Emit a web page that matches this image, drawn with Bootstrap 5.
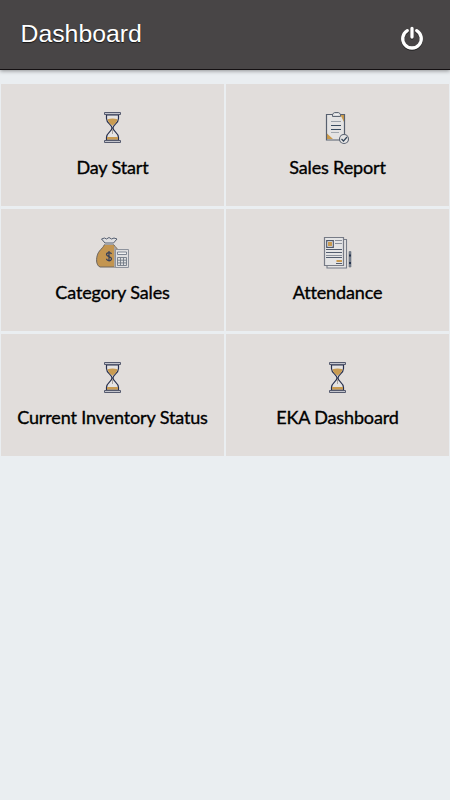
<!DOCTYPE html>
<html lang="en">
<head>
<meta charset="utf-8">
<meta name="viewport" content="width=device-width, initial-scale=1">
<title>Dashboard</title>
<link href="https://cdn.jsdelivr.net/npm/bootstrap@5.3.0/dist/css/bootstrap.min.css" rel="stylesheet">
<style>
body{background:#eaeef1;font-family:"Liberation Sans",Arial,sans-serif}
.app-bar{height:70px;background:#484546;border-bottom:1px solid #141012;box-shadow:0 1px 4px rgba(0,0,0,.4);padding:0 26px 0 20.500px}
.app-title{font-size:24.800px;line-height:30px;color:#fff;text-shadow:0 1px 1px rgba(0,0,0,.7);padding-bottom:2px}
.power{margin-top:7px;filter:drop-shadow(0 1px 0 #222)}
.tiles{margin-top:14px;padding:0 1px;gap:3px 2px;display:grid;grid-template-columns:1fr 1fr}
.tile{height:122px;background:#e1dddb;padding-top:21px;color:#000}
.tile-label{font-family:Lato,sans-serif;font-size:18px;line-height:24px;letter-spacing:-.14px;-webkit-text-stroke:.35px #000;margin-top:4.500px}
</style>
</head>
<body>
<svg class="d-none">
<symbol id="hourglass" viewBox="0 0 45 45">
<path d="M16.500 10v3.500c0 5 5.500 6 5.500 9.500s-5.500 4.500-5.500 9.500V35h12v-2.500c0-5-5.500-6-5.500-9.500s5.500-4.500 5.500-9.500V10z" fill="#e5e3e2" stroke="#28304e" stroke-width="1.200"/>
<path d="M17.500 14.300q5-1.500 10 0c-.5 3-2.500 4.500-5 6.500-2.500-2-4.500-3.500-5-6.500zM17 32h11v2.500H17z" fill="#c99b51"/>
<path d="M22.500 24v5" stroke="#a9a39f"/>
<path d="M14.500 7.500h16v2h-16zM14.500 35.500h16v2h-16z" fill="#c3c4cc" stroke="#555a6e"/>
</symbol>
<symbol id="clipboard" viewBox="0 0 45 45">
<path d="M11.500 9.500h18v25h-18z" fill="#e4e3e3"/>
<path d="M25.500 10H29v7zM12 28.500V34h6z" fill="#cc9b4b"/>
<path d="M29.500 29V9.500h-18v25.500H25" fill="none" stroke="#57606f" stroke-width="1.200"/>
<path d="M17.500 11.500V9l2-1.500h4L25.500 9v2.500z" fill="#d6d7da" stroke="#606875"/>
<path d="M19.500 9.500h4" stroke="#f1f1f1"/>
<path d="M16 16.500h10" stroke="#9ba1a9"/><path d="M16 20.500h10M16 24.500h10" stroke="#3a4c60"/><path d="M16 27.500h8" stroke="#a3a8ae"/>
<circle cx="29" cy="34" r="4.500" fill="#e5e4e4" stroke="#596170" stroke-width="1.100"/>
<path d="m26.500 34 2 2 3.500-4" fill="none" stroke="#34465a" stroke-width="1.200"/>
</symbol>
<symbol id="moneybag" viewBox="0 0 45 45">
<path d="M14.500 14.500h9c2 3 5 4.500 6 9V37H10c-5-2-4-12-.5-16 2-2.500 4-4 5-6.500z" fill="#c39550" stroke="#6b6560"/>
<path d="M24 16c2 2 4 4 5 7v14h-5z" fill="#aaa5a2"/>
<path d="m15 13-3.500-4 3-1 2 1 2.500-1.500L21.500 9 24 8l3 1-3.500 4z" fill="#dfdfe1" stroke="#555e70"/>
<path d="M14.500 14.300h9" stroke="#a4a6aa" stroke-width="1.300"/>
<path d="M21.500 24c-.5-2-5-2-5 .5s5 1.700 5 4.300-4.700 2.500-5 0M19 21v10.500" fill="none" stroke="#353f59" stroke-width="1.200"/>
<path d="M25.500 19.500h13v18h-13z" fill="#dfdfe0" stroke="#8d929c"/>
<path d="M27.500 22h9v2.500h-9z" fill="#f0f0f0" stroke="#737b88" stroke-width=".9"/>
<path d="M27.500 27.500h9v8h-9zM30.500 27.500v8M33.500 27.500v8M27.500 30.200h9M27.500 32.900h9" fill="none" stroke="#727a87" stroke-width=".9"/>
</symbol>
<symbol id="document" viewBox="0 0 45 45">
<path d="M29 9.500h2.500v28.500H12V36" fill="#e4e3e3" stroke="#777d89" stroke-width="1.100"/>
<path d="M9.500 7.500h19v28h-19z" fill="#e4e4e5" stroke="#777b86" stroke-width="1.200"/>
<path d="M11.700 10.700h6.600v6.600h-6.600z" fill="#eee" stroke="#50586a" stroke-width="1.200"/>
<path d="M13 12h4v4h-4zM21.500 30h5.500v2h-5.500z" fill="#c99a50"/>
<path d="M20 10.500h7M20 13.500h7M11 25.500h16" stroke="#8c919c"/><path d="M11 19.500h16M11 22.500h16M11 27.500h16M21 33.500h6" stroke="#525c6e"/>
<path d="M34 21.500h2v15.500h-2z" fill="#777f8d" stroke="#6a7280" stroke-width=".6"/>
<path d="M34 25.500h2M34 33h2" stroke="#26344e" stroke-width="2"/>
</symbol>
</svg>
<header class="app-bar d-flex align-items-center justify-content-between">
<h1 class="app-title m-0 fw-normal">Dashboard</h1>
<svg class="power" width="24" height="24" viewBox="0 0 24 24" fill="none" stroke="#fff" stroke-linecap="round" stroke-width="3.300" role="img" aria-label="Log out"><path d="M12 2.500v8.500M7.300 4.700a9.300 9.300 0 1 0 9.400 0"/></svg>
</header>
<main class="tiles">
<div class="tile d-flex flex-column align-items-center"><svg width="45" height="45"><use href="#hourglass"/></svg><div class="tile-label">Day Start</div></div>
<div class="tile d-flex flex-column align-items-center"><svg width="45" height="45"><use href="#clipboard"/></svg><div class="tile-label">Sales Report</div></div>
<div class="tile d-flex flex-column align-items-center"><svg width="45" height="45"><use href="#moneybag"/></svg><div class="tile-label">Category Sales</div></div>
<div class="tile d-flex flex-column align-items-center"><svg width="45" height="45"><use href="#document"/></svg><div class="tile-label">Attendance</div></div>
<div class="tile d-flex flex-column align-items-center"><svg width="45" height="45"><use href="#hourglass"/></svg><div class="tile-label">Current Inventory Status</div></div>
<div class="tile d-flex flex-column align-items-center"><svg width="45" height="45"><use href="#hourglass"/></svg><div class="tile-label">EKA Dashboard</div></div>
</main>
<script src="https://cdn.jsdelivr.net/npm/bootstrap@5.3.0/dist/js/bootstrap.bundle.min.js"></script>
</body>
</html>
